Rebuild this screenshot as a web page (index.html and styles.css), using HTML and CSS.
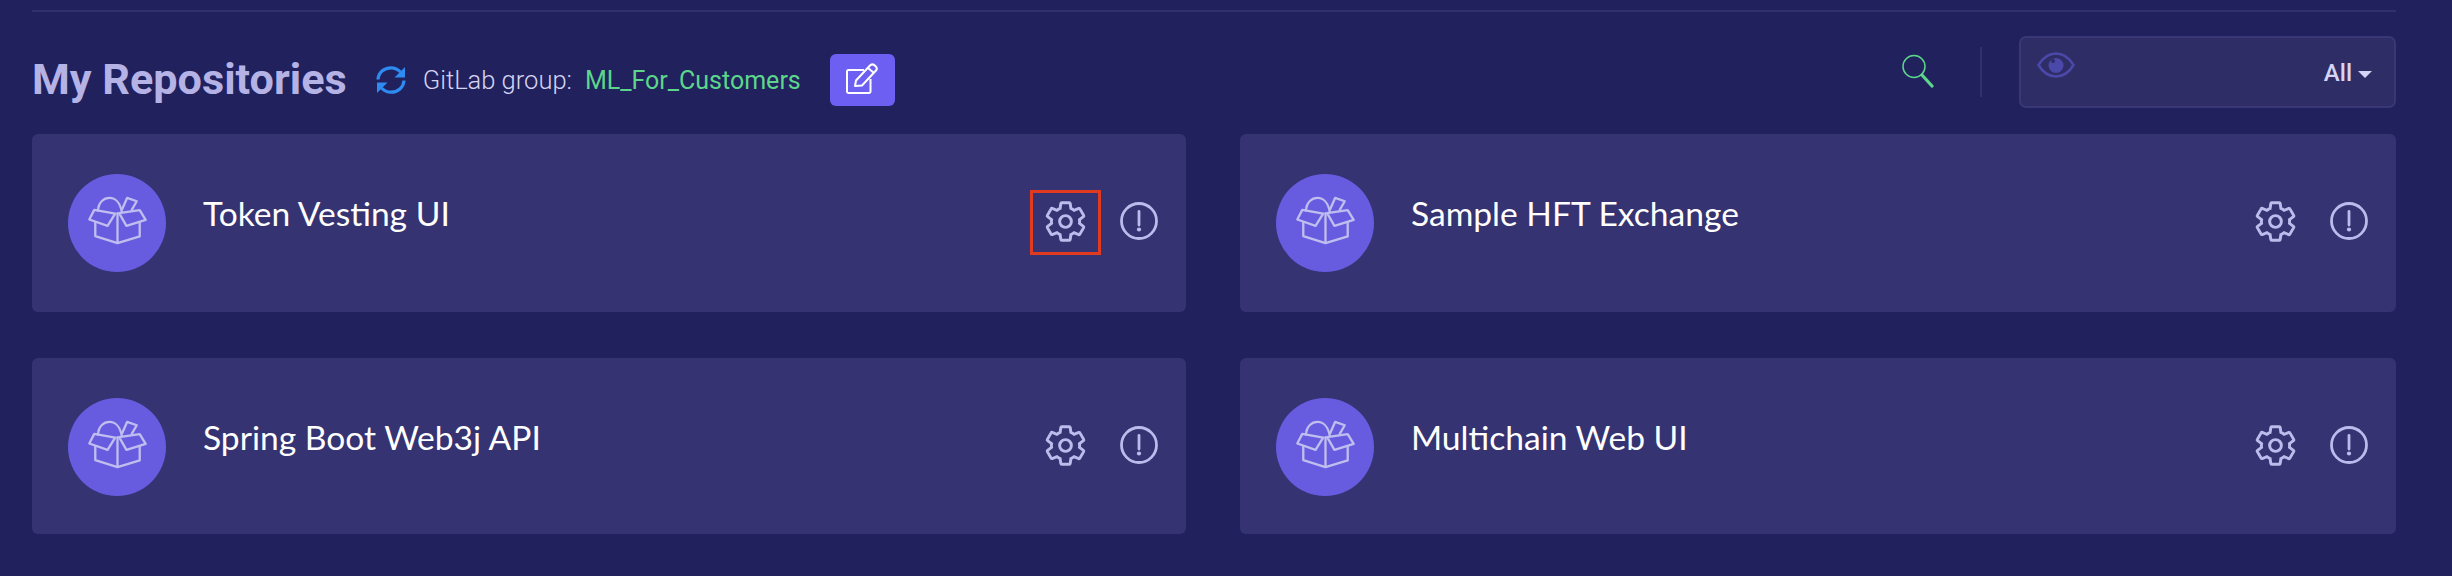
FILE: index.html
```html
<!DOCTYPE html>
<html lang="en">
<head>
<meta charset="utf-8">
<title>My Repositories</title>
<link rel="stylesheet" href="styles.css">
</head>
<body>
<svg class="defs" aria-hidden="true">
  <symbol id="box" viewBox="100 85 190 155">
    <g fill="none" stroke="currentColor" stroke-width="7" stroke-linejoin="round" stroke-linecap="round">
      <path d="M136 134C138 108 154 96 171 96C188 96 203 110 208 138"/>
      <path d="M110 161L125 132L188 143L165 180Z"/>
      <path d="M200 142L262 133L280 162L222 180Z"/>
      <path d="M128 170V211L195 232L262 212V172"/>
      <path d="M195 142V232"/>
      <path d="M209 130L224 96L253 106L238 132"/>
    </g>
  </symbol>
  <symbol id="gear" viewBox="0 0 24 24">
    <path fill="none" stroke="currentColor" stroke-width="1.5" stroke-linejoin="miter" d="M19.14 12.94c.04-.3.06-.61.06-.94 0-.32-.02-.64-.07-.94l2.03-1.58c.18-.14.23-.41.12-.61l-1.92-3.32c-.12-.22-.37-.29-.59-.22l-2.39.96c-.5-.38-1.03-.7-1.62-.94l-.36-2.54c-.04-.24-.24-.41-.48-.41h-3.84c-.24 0-.43.17-.47.41l-.36 2.54c-.59.24-1.13.57-1.62.94l-2.39-.96c-.22-.08-.47 0-.59.22L2.74 8.87c-.12.21-.08.47.12.61l2.03 1.58c-.05.3-.09.63-.09.94s.02.64.07.94l-2.03 1.58c-.18.14-.23.41-.12.61l1.92 3.32c.12.22.37.29.59.22l2.39-.96c.5.38 1.03.7 1.62.94l.36 2.54c.05.24.24.41.48.41h3.84c.24 0 .44-.17.47-.41l.36-2.54c.59-.24 1.13-.56 1.62-.94l2.39.96c.22.08.47 0 .59-.22l1.92-3.32c.12-.22.07-.47-.12-.61l-2.01-1.58z"/>
    <circle cx="12" cy="12" r="3" fill="none" stroke="currentColor" stroke-width="1.5"/>
  </symbol>
  <symbol id="alert" viewBox="0 0 38 38">
    <circle cx="19" cy="19" r="17.5" fill="none" stroke="currentColor" stroke-width="2.8"/>
    <path d="M19 9.500V23" fill="none" stroke="currentColor" stroke-width="2.8" stroke-linecap="round"/>
    <circle cx="19" cy="27.500" r="2.100" fill="currentColor"/>
  </symbol>
</svg>

<main class="page">
  <hr class="rule">
  <header class="toolbar">
    <div class="toolbar-left">
      <h1 class="title">My Repositories</h1>
      <svg class="sync" viewBox="0 0 30 28" aria-hidden="true"><g fill="none" stroke="currentColor" stroke-width="3.200"><path d="M2 13.500C2.500 6.500 8 1.800 15 1.800C18.800 1.800 22 3.300 24.500 6"/><path d="M28 14.500C27.500 21.500 22 26.200 15 26.200C11.200 26.200 8 24.700 5.500 22"/></g><path fill="currentColor" d="M29 1V11.500H18.500Z"/><path fill="currentColor" d="M1 27V16.500H11.500Z"/></svg>
      <span class="group-label">GitLab group:</span>
      <span class="group-name">ML_For_Customers</span>
      <button class="edit" type="button" aria-label="Edit">
        <svg viewBox="0 0 40 36" class="edit-icon" aria-hidden="true"><g fill="none" stroke="currentColor" stroke-width="2" stroke-linejoin="round"><path d="M22 8H6.500a1.500 1.500 0 0 0-1.500 1.500V29.500A1.500 1.500 0 0 0 6.500 31H27a1.500 1.500 0 0 0 1.500-1.500V17"/><path d="M13 24L14 18.500L28 3.500C29 2.300 31 2.100 33 3.600C35 5.100 35.200 7 34.200 8.300L20 23.500Z"/><path d="M26 6L32 11"/></g></svg>
      </button>
    </div>
    <div class="toolbar-right">
      <svg class="search" viewBox="0 0 32 34" aria-hidden="true"><circle cx="12" cy="12.500" r="11" fill="none" stroke="currentColor" stroke-width="1.500"/><path d="M20 21L30 32" fill="none" stroke="currentColor" stroke-width="3.200" stroke-linecap="round"/></svg>
      <span class="divider"></span>
      <div class="filter">
        <svg class="eye" viewBox="0 0 38 26" aria-hidden="true"><path fill="none" stroke="currentColor" stroke-width="2.600" d="M1.500 13C6 5.500 12 1.500 19 1.500S32 5.500 36.500 13C32 20.500 26 24.500 19 24.500S6 20.500 1.500 13Z"/><circle cx="19" cy="13.500" r="7.500" fill="currentColor"/><circle cx="16" cy="9" r="2" fill="#2f2d66"/></svg>
        <span class="filter-value">All</span>
        <span class="caret"></span>
      </div>
    </div>
  </header>

  <section class="grid">
    <article class="card">
      <span class="avatar"><svg class="box"><use href="#box"/></svg></span>
      <h2 class="name">Token Vesting UI</h2>
      <div class="actions">
        <span class="action marked"><svg class="gear"><use href="#gear"/></svg></span>
        <svg class="alert"><use href="#alert"/></svg>
      </div>
    </article>
    <article class="card">
      <span class="avatar"><svg class="box"><use href="#box"/></svg></span>
      <h2 class="name">Sample HFT Exchange</h2>
      <div class="actions">
        <span class="action"><svg class="gear"><use href="#gear"/></svg></span>
        <svg class="alert"><use href="#alert"/></svg>
      </div>
    </article>
    <article class="card">
      <span class="avatar"><svg class="box"><use href="#box"/></svg></span>
      <h2 class="name">Spring Boot Web3j API</h2>
      <div class="actions">
        <span class="action"><svg class="gear"><use href="#gear"/></svg></span>
        <svg class="alert"><use href="#alert"/></svg>
      </div>
    </article>
    <article class="card">
      <span class="avatar"><svg class="box"><use href="#box"/></svg></span>
      <h2 class="name">Multichain Web UI</h2>
      <div class="actions">
        <span class="action"><svg class="gear"><use href="#gear"/></svg></span>
        <svg class="alert"><use href="#alert"/></svg>
      </div>
    </article>
  </section>
</main>
</body>
</html>
```
FILE: styles.css
```css
* { box-sizing: border-box; }
html, body { margin: 0; height: 100%; }
body {
  background: #21215e;
  font-family: Roboto, "Liberation Sans", sans-serif;
  overflow: hidden;
}
.defs { width: 0; height: 0; position: absolute; }
.page { padding: 10px 56px 0 32px; }
.rule { margin: 0; border: 0; height: 2px; background: #32316f; }
.toolbar {
  display: flex;
  align-items: flex-start;
  justify-content: space-between;
  height: 122px;
  padding-top: 24px;
}
.toolbar-left { display: flex; align-items: center; height: 72px; padding-top: 16px; }
.title {
  margin: 0;
  font-size: 43.2px;
  font-weight: 700;
  color: #b5b3e6;
  line-height: 1;
}
.sync { width: 30px; height: 28px; margin-left: 29px; color: #2e8bf2; }
.group-label { margin-left: 17px; font-size: 25.5px; font-weight: 300; color: #d5d4f2; }
.group-name { margin-left: 13px; font-size: 25px; font-weight: 400; color: #5cd68a; }
.edit {
  margin-left: 29px;
  width: 65px;
  height: 52px;
  border: 0;
  padding: 0;
  border-radius: 6px;
  background: #6c5ff2;
  color: #fff;
  display: flex;
  align-items: center;
  justify-content: center;
}
.edit-icon { width: 40px; height: 36px; }
.toolbar-right { display: flex; align-items: center; height: 72px; }
.search { width: 32px; height: 34px; color: #5cd68a; margin-top: -2px; }
.divider { width: 2px; height: 50px; margin: 0 37px 0 46px; background: #32316f; }
.filter {
  width: 377px;
  height: 72px;
  display: flex;
  align-items: center;
  padding: 0 22px 0 16px;
  border: 2px solid #393777;
  border-radius: 7px;
  background: #2f2d66;
}
.eye { width: 38px; height: 26px; color: #4a48a8; margin-top: -14px; }
.filter-value { margin: 2px 0 0 auto; font-size: 24px; font-weight: 500; color: #d5d4f6; }
.caret {
  margin: 4px 0 0 6px;
  width: 0;
  height: 0;
  border-left: 7px solid transparent;
  border-right: 7px solid transparent;
  border-top: 7px solid #d5d4f6;
}
.grid {
  display: grid;
  grid-template-columns: 1154px 1156px;
  grid-template-rows: 178px 176px;
  column-gap: 54px;
  row-gap: 46px;
}
.card {
  display: flex;
  align-items: flex-start;
  padding: 40px 28px 0 36px;
  border-radius: 6px;
  background: #353372;
}
.avatar {
  flex: none;
  width: 98px;
  height: 98px;
  border-radius: 50%;
  background: #675ce0;
  display: flex;
  align-items: center;
  justify-content: center;
  color: #c0bdef;
}
.box { width: 63px; height: 52px; margin-top: -6px; }
.name {
  margin: 17px 0 0 37px;
  font-family: Lato, sans-serif;
  font-size: 33.6px;
  font-weight: 400;
  line-height: 44px;
  color: #fff;
}
.actions { margin: -2px 0 0 auto; display: flex; align-items: center; height: 98px; color: #bdbbec; }
.action {
  width: 71px;
  height: 65px;
  display: flex;
  align-items: center;
  justify-content: center;
}
.marked { border: 3px solid #e03a21; margin-top: 3px; padding-bottom: 3px; }
.gear { width: 47px; height: 47px; }
.alert { width: 38px; height: 38px; margin-left: 19px; }
```
